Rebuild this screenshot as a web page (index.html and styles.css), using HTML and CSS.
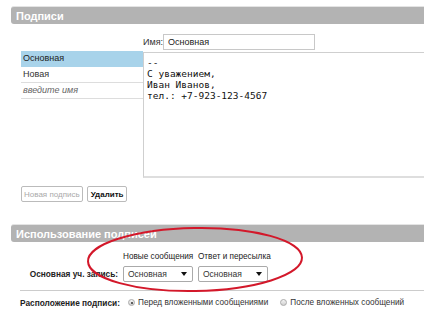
FILE: index.html
```html
<!DOCTYPE html>
<html lang="ru">
<head>
    <meta charset="UTF-8">
    <title>Подписи</title>
    <link rel="stylesheet" href="styles.css">
</head>
<body>

    <!-- ПОДПИСИ -->
    <section class="block">
        <h2 class="block-title">Подписи</h2>
        <div class="sig-grid">
            <div></div>
            <div class="name-row">
                <label>Имя:</label>
                <div class="text-input">Основная</div>
            </div>
            <ul class="sig-list">
                <li class="active">Основная</li>
                <li>Новая</li>
                <li class="placeholder">введите имя</li>
            </ul>
            <div class="sig-editor">--
С уважением,
Иван Иванов,
тел.: +7-923-123-4567</div>
        </div>
        <div class="buttons">
            <button class="btn" disabled>Новая подпись</button>
            <button class="btn strong">Удалить</button>
        </div>
    </section>

    <!-- ИСПОЛЬЗОВАНИЕ -->
    <section class="block">
        <h2 class="block-title">Использование подписей</h2>
        <div class="usage-grid">
            <div></div>
            <div class="col-title">Новые сообщения</div>
            <div class="col-title">Ответ и пересылка</div>
            <div class="row-label">Основная уч. запись:</div>
            <div class="select"><span>Основная</span><i class="arrow"></i></div>
            <div class="select"><span>Основная</span><i class="arrow"></i></div>
        </div>
        <div class="placement">
            <div class="row-label">Расположение подписи:</div>
            <label class="radio"><i class="dot checked"></i>Перед вложенными сообщениями</label>
            <label class="radio"><i class="dot"></i>После вложенных сообщений</label>
        </div>
    </section>

    <!-- красный овал поверх -->
    <svg class="mark" width="424" height="331" viewBox="0 0 424 331">
        <ellipse cx="195" cy="259.5" rx="107" ry="31.5" transform="rotate(-1 195 259.5)" fill="none" stroke="#d3182a" stroke-width="2"/>
    </svg>

</body>
</html>
```

FILE: styles.css
```css
/* ОСНОВНОЕ */
* { margin: 0; padding: 0; box-sizing: border-box; }
body {
    font-family: 'Liberation Sans', Arial, sans-serif;
    font-size: 9px;
    color: #333;
    background: #fff;
    overflow: hidden;
    padding-top: 6px;
    position: relative;
    white-space: nowrap;
}

/* ЗАГОЛОВКИ БЛОКОВ */
.block-title {
    margin-left: 11px;
    height: 18px;
    line-height: 18px;
    padding-left: 5px;
    background: #b3b3b3;
    border-top: 1px solid #e4e4e4;
    border-radius: 3px 0 0 3px;
    color: #fff;
    font-size: 11px;
    font-weight: bold;
}

/* ПОДПИСИ */
.sig-grid {
    display: grid;
    grid-template-columns: 143px 1fr;
    margin-top: 10px;
}

.name-row { display: flex; align-items: center; height: 16px; margin-bottom: 1px; }
.name-row label { width: 20px; }

.text-input {
    width: 152px;
    height: 16px;
    line-height: 14px;
    padding-left: 4px;
    border: 1px solid #c8c8c8;
    color: #222;
}

.sig-list { list-style: none; margin-left: 21px; }
.sig-list li {
    height: 16px;
    line-height: 15px;
    padding-left: 2px;
    border-bottom: 1px solid #ddd;
}
.sig-list li.active { background: #a8d3ea; border-bottom-color: #a8d3ea; color: #222; }
.sig-list li.placeholder { font-style: italic; color: #666; }

.sig-editor {
    margin-top: 1px;
    height: 126px;
    width: calc(100% + 4px);
    padding: 4px 3px;
    border: 1px solid #cfcfcf;
    border-bottom: 2px solid #dedede;
    font-family: 'DejaVu Sans Mono', monospace;
    font-size: 9.5px;
    line-height: 11px;
    white-space: pre;
    color: #111;
}

.buttons { display: flex; gap: 4px; margin: 8px 0 0 21px; }
.btn {
    height: 16px;
    padding: 0 2px;
    font-family: inherit;
    font-size: 8px;
    color: #111;
    background: #fff;
    border: 1px solid #bbb;
    border-radius: 2px;
}
.btn.strong { font-weight: bold; padding: 0 3px; }
.btn:disabled { color: #aaa; }

.block + .block { margin-top: 22px; }

/* ИСПОЛЬЗОВАНИЕ */
.usage-grid {
    display: grid;
    grid-template-columns: 98px 70px 70px;
    column-gap: 5px;
    row-gap: 3px;
    align-items: center;
    padding: 9px 0 8px;
    margin-left: 20px;
    border-bottom: 1px solid #ccc;
}

.col-title { height: 12px; line-height: 12px; color: #222; font-size: 8.2px; }
.row-label { font-weight: bold; text-align: right; color: #222; font-size: 8.3px; }

.select {
    height: 16px;
    display: flex;
    align-items: center;
    justify-content: space-between;
    padding: 0 5px 0 4px;
    border: 1px solid #aaa;
    border-radius: 2px;
    color: #333;
    font-size: 8.5px;
}
.arrow {
    width: 0;
    height: 0;
    border-left: 3px solid transparent;
    border-right: 3px solid transparent;
    border-top: 4px solid #111;
}

.placement {
    display: flex;
    align-items: center;
    height: 23px;
    padding-left: 20px;
    font-size: 8.2px;
}
.placement .row-label { width: 98px; text-align: left; }
.radio { display: flex; align-items: center; margin-left: 10px; color: #333; }
.radio + .radio { margin-left: 12px; }
.dot {
    width: 7px;
    height: 7px;
    margin-right: 3px;
    border-radius: 50%;
    border: 1px solid #aaa;
    background: linear-gradient(#f4f4f4, #d0d0d0);
    position: relative;
}
.dot.checked::after {
    content: '';
    position: absolute;
    left: 1.5px;
    top: 1.5px;
    width: 2px;
    height: 2px;
    border-radius: 50%;
    background: #333;
}

/* ОВАЛ */
.mark { position: absolute; left: 0; top: 0; pointer-events: none; }
```
